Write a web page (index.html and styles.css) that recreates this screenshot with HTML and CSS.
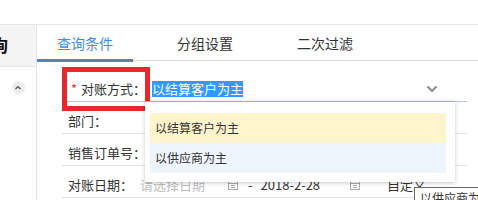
FILE: index.html
```html
<!DOCTYPE html>
<html lang="zh">
<head>
<meta charset="utf-8">
<link rel="stylesheet" href="styles.css">
</head>
<body>
<div class="page">
  <div class="topbar"></div>
  <div class="main">
    <div class="side">
      <div class="side-head"><div class="side-title">查询</div></div>
      <div class="side-body">
        <span class="toggle">
          <svg width="12" height="12" viewBox="0 0 12 12"><path d="M3.5 7 L6 4.6 L8.5 7" fill="none" stroke="#555" stroke-width="1.4"/></svg>
        </span>
      </div>
    </div>
    <div class="content">
      <div class="tabs">
        <div class="tab active">查询条件</div>
        <div class="tab">分组设置</div>
        <div class="tab">二次过滤</div>
      </div>
      <div class="form">
        <div class="row row-first">
          <span class="label"><span class="req">*</span> 对账方式<span class="colon">：</span></span>
          <span class="value"><span class="sel">以结算客户为主</span></span>
          <svg class="chev" width="12" height="8" viewBox="0 0 12 8"><path d="M1.5 1.5 L6 6 L10.5 1.5" fill="none" stroke="#8c8c8c" stroke-width="2"/></svg>
        </div>
        <div class="row"><span class="label">部门<span class="colon">：</span></span></div>
        <div class="row"><span class="label">销售订单号<span class="colon">：</span></span></div>
        <div class="row">
          <span class="label">对账日期<span class="colon">：</span></span>
          <span class="ph">请选择日期</span>
          <svg class="cal cal1" width="10" height="10" viewBox="0 0 10 10"><rect x="0.5" y="1.5" width="9" height="8" fill="none" stroke="#aaa"/><path d="M0.5 3.5 H9.5 M3 5.5 H7 M3 7.5 H7" stroke="#aaa" stroke-width="1"/></svg>
          <span class="dash">-</span>
          <span class="date">2018-2-28</span>
          <svg class="cal cal2" width="10" height="10" viewBox="0 0 10 10"><rect x="0.5" y="1.5" width="9" height="8" fill="none" stroke="#aaa"/><path d="M0.5 3.5 H9.5 M3 5.5 H7 M3 7.5 H7" stroke="#aaa" stroke-width="1"/></svg>
          <span class="custom">自定义</span>
        </div>
        <div class="redbox"></div>
        <div class="dropdown">
          <div class="opt opt-hover">以结算客户为主</div>
          <div class="opt opt-selected">以供应商为主</div>
        </div>
        <div class="tip">以供应商为主</div>
      </div>
    </div>
  </div>
</div>
</body>
</html>
```
FILE: styles.css
```css
* { box-sizing: border-box; }
html, body { margin: 0; padding: 0; background: #fff; }
body {
  font-family: "Noto Sans CJK SC", "Noto Sans", sans-serif;
  color: #333;
  width: 478px;
  height: 200px;
  overflow: hidden;
}
.page { width: 478px; height: 200px; overflow: hidden; }
.topbar { height: 25px; border-bottom: 1px solid #e6e6e6; }
.main { display: flex; height: 175px; }
.side {
  width: 37px;
  flex-shrink: 0;
  border-right: 1px solid #e4e4e4;
  display: flex;
  flex-direction: column;
}
.side-head {
  height: 42px;
  background: #f4f4f4;
  border-bottom: 1px solid #e9e9e9;
  overflow: hidden;
  padding-top: 10px;
}
.side-title {
  font-size: 17px;
  font-weight: bold;
  color: #111;
  line-height: 20px;
  white-space: nowrap;
  text-indent: -26px;
}
.side-body { display: flex; justify-content: center; padding-top: 14px; }
.toggle {
  width: 13px; height: 13px;
  border-radius: 50%;
  background: #ececec;
  display: flex; align-items: center; justify-content: center;
}
.content { flex: 1; position: relative; }
.tabs {
  height: 36px;
  border-bottom: 1px solid #dcdcdc;
  display: flex;
  gap: 24px;
}
.tab {
  width: 96px;
  text-align: center;
  font-size: 14px;
  line-height: 20px;
  padding-top: 8px;
  color: #333;
}
.tab.active {
  color: #3d8ddb;
  border-bottom: 3px solid #4a88b8;
  margin-bottom: -2px;
}
.form { padding: 9px 0 0 25px; position: relative; }
.row {
  width: 405px;
  height: 32px;
  border-bottom: 1px solid #e3e3e3;
  display: flex;
  align-items: center;
  padding: 6px 0 0 6px;
  font-size: 13px;
  white-space: nowrap;
}
.row-first { border-bottom-color: #b9c3d3; padding-left: 9px; }
.label { line-height: 20px; color: #333; }
.colon { font-family: "Noto Sans CJK TC", "Noto Sans CJK SC", sans-serif; }
.req { color: #e33; margin-right: 1px; }
.value { margin-left: 6px; flex: 1; }
.sel {
  display: inline-block;
  background: #3399ff;
  color: #fff;
  line-height: 16px;
  height: 16px;
}
.chev { margin-right: 29px; }
.ph { color: #bdbdbd; margin-left: 7px; line-height: 20px; }
.cal1 { margin-left: 23px; }
.dash { margin-left: 10px; }
.date { margin-left: 8px; color: #333; }
.cal2 { margin-left: 30px; }
.custom { margin-left: 27px; }
.redbox {
  position: absolute;
  left: 25px;
  top: 6px;
  width: 88px;
  height: 44px;
  border: 5px solid #e8262b;
}
.dropdown {
  position: absolute;
  left: 108px;
  top: 40px;
  width: 310px;
  height: 81px;
  background: #fff;
  border-top: 1px solid #9ea6dd;
  box-shadow: 0 1px 4px rgba(0,0,0,0.22);
  padding: 11px 9px 0 5px;
}
.opt {
  height: 30px;
  line-height: 30px;
  font-size: 12px;
  padding-left: 5px;
  color: #333;
}
.opt-hover { background: #fff5cc; }
.opt-selected { background: #edf4fc; }
.tip {
  position: absolute;
  left: 377px;
  top: 126px;
  border: 1px solid #666;
  background: #fff;
  font-size: 12px;
  line-height: 16px;
  padding: 2px 5px;
  color: #333;
  white-space: nowrap;
}
```
